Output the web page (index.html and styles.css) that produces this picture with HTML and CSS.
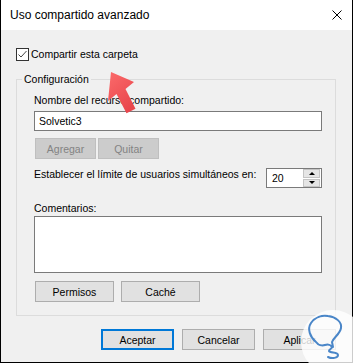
FILE: index.html
```html
<!DOCTYPE html>
<html lang="es">

<head>
    <meta charset="UTF-8">
    <meta name="viewport" content="width=device-width, initial-scale=1.0">
    <title>Uso compartido avanzado</title>
    <link rel="stylesheet" href="styles.css">
</head>

<body>
    <div class="window">
        <div class="titlebar">
            <span class="title">Uso compartido avanzado</span>
            <svg class="close" width="10" height="10" viewBox="0 0 10 10">
                <path d="M0.5 0.5 L9.5 9.5 M9.5 0.5 L0.5 9.5" stroke="#000" stroke-width="1" fill="none" />
            </svg>
        </div>

        <div class="content">
            <label class="share">
                <span class="checkbox">
                    <svg width="11" height="11" viewBox="0 0 11 11">
                        <path d="M1.5 5.5 L4 8 L9.5 2" stroke="#444" stroke-width="1" fill="none" />
                    </svg>
                </span>
                Compartir esta carpeta
            </label>

            <fieldset class="group">
                <legend>Configuración</legend>

                <div class="label">Nombre del recurso compartido:</div>
                <div class="field">Solvetic3</div>

                <div class="btn-row small">
                    <span class="btn disabled">Agregar</span>
                    <span class="btn disabled">Quitar</span>
                </div>

                <div class="limit-row">
                    <span>Establecer el límite de usuarios simultáneos en:</span>
                    <div class="spinner">
                        <span class="spin-value">20</span>
                        <div class="spin-btns">
                            <span class="spin-btn"><span class="tri-up"></span></span>
                            <span class="spin-btn"><span class="tri-down"></span></span>
                        </div>
                    </div>
                </div>

                <div class="label comments-label">Comentarios:</div>
                <div class="field textarea"></div>

                <div class="btn-row wide">
                    <span class="btn">Permisos</span>
                    <span class="btn">Caché</span>
                </div>
            </fieldset>

            <div class="actions">
                <span class="btn primary">Aceptar</span>
                <span class="btn">Cancelar</span>
                <span class="btn">Aplicar</span>
            </div>
        </div>

        <!-- red pointer drawn over the dialog -->
        <svg class="arrow" width="45" height="55" viewBox="0 0 45 55">
            <defs>
                <linearGradient id="arrowFill" x1="0" y1="0" x2="0.6" y2="1">
                    <stop offset="0" stop-color="#fb6b6b" />
                    <stop offset="1" stop-color="#e9464c" />
                </linearGradient>
            </defs>
            <polygon points="11,7 34,17 25.5,24 35.5,43.7 26.5,48.3 16.5,29 8,36" fill="url(#arrowFill)" />
        </svg>

        <!-- watermark logo -->
        <svg class="logo" width="70" height="70" viewBox="0 0 70 70">
            <circle cx="35" cy="35" r="32" fill="rgba(255,255,255,0.8)" />
            <path d="M18 35 C12 30 9 22 13 16 C17 10 24 8 30 9 C38 10 44 15 43 21 C42 27 36 30 34 35 L35 40
                     M18 35 C20 38 24 39 27 38 C30 37 33 38 34 40 C34 42 31 42 31 44 C32 46 40 45 40 48 C40 51 34 52 30 50"
                stroke="#4a86c8" stroke-width="2" fill="none" stroke-linecap="round" stroke-linejoin="round" />
        </svg>
    </div>
</body>

</html>
```

FILE: styles.css
```css
body {
    margin: 0;
    font-family: "Liberation Sans", Arial, sans-serif;
    font-size: 10.5px;
    line-height: 16px;
    color: #000;
    background-color: #fff;
}

.window {
    position: relative;
    width: 353px;
    height: 363px;
    box-sizing: border-box;
    border-left: 1px solid #000;
    border-right: 1px solid #000;
    border-bottom: 1px solid #000;
    background-color: #f0f0f0;
}

.titlebar {
    height: 30px;
    background-color: #fff;
    display: flex;
    align-items: center;
    justify-content: space-between;
    padding: 0 10px 0 9px;
}

.title {
    font-size: 12px;
}

.close {
    display: block;
}

.content {
    padding: 16px 16px 0 15px;
}

.share {
    display: flex;
    align-items: center;
    gap: 2px;
    height: 16px;
}

.checkbox {
    width: 13px;
    height: 13px;
    box-sizing: border-box;
    border: 1px solid #333;
    background-color: #fff;
    display: flex;
}

.group {
    margin: 9px 0 0 0;
    padding: 5px 13px 13px 17px;
    border: 1px solid #dcdcdc;
    min-width: 0;
}

.group legend {
    margin-left: -12px;
    padding: 0 2px;
    line-height: 16px;
}

.label {
    height: 16px;
}

.field {
    height: 20px;
    box-sizing: border-box;
    border: 1px solid #7a7a7a;
    background-color: #fff;
    margin-top: 3px;
    padding: 1px 4px;
}

.textarea {
    height: 57px;
    margin-top: 0;
}

.btn-row {
    display: flex;
    padding-left: 1px;
}

.btn-row.small {
    margin-top: 7px;
    gap: 2px;
}

.btn-row.small .btn {
    width: 61px;
}

.btn-row.wide {
    margin-top: 8px;
    gap: 7px;
}

.btn-row.wide .btn {
    width: 79px;
}

.btn {
    height: 21px;
    box-sizing: border-box;
    border: 1px solid #adadad;
    background-color: #e1e1e1;
    display: flex;
    align-items: center;
    justify-content: center;
}

.btn.disabled {
    background-color: #cccccc;
    border-color: #bfbfbf;
    color: #838383;
}

.btn.primary {
    border: 2px solid #0078d7;
}

.limit-row {
    display: flex;
    justify-content: space-between;
    align-items: flex-start;
    margin-top: 7px;
}

.spinner {
    margin-top: 2px;
    width: 56px;
    height: 20px;
    box-sizing: border-box;
    border: 1px solid #7a7a7a;
    background-color: #fff;
    display: flex;
}

.spin-value {
    flex: 1;
    padding-left: 5px;
    line-height: 18px;
}

.spin-btns {
    width: 17px;
    display: flex;
    flex-direction: column;
    gap: 1px;
    margin-right: 1px;
}

.spin-btn {
    height: 8.5px;
    flex: 1;
    background-color: #e5e5e5;
    border: 1px solid #c4c4c4;
    box-sizing: border-box;
    display: flex;
    align-items: center;
    justify-content: center;
}

.tri-up {
    border-left: 3px solid transparent;
    border-right: 3px solid transparent;
    border-bottom: 3px solid #000;
}

.tri-down {
    border-left: 3px solid transparent;
    border-right: 3px solid transparent;
    border-top: 3px solid #000;
}

.comments-label {
    margin-top: 12px;
}

.actions {
    display: flex;
    justify-content: flex-end;
    gap: 8px;
    margin-top: 13px;
}

.actions .btn {
    width: 73px;
}

.arrow {
    position: absolute;
    left: 99px;
    top: 65px;
}

.logo {
    position: absolute;
    left: 297px;
    top: 307px;
}
```
